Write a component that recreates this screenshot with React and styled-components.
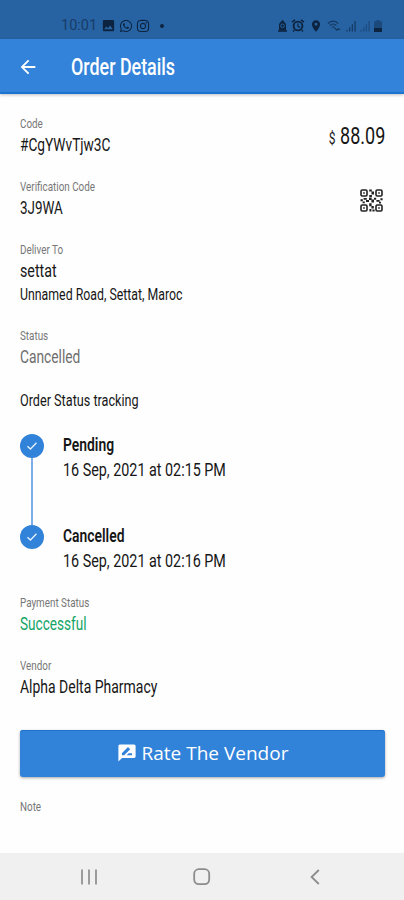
import React from "react";
import styled, { createGlobalStyle } from "styled-components";
import { MdArrowBack, MdImage, MdLocationOn } from "react-icons/md";
import { FaWhatsapp, FaInstagram } from "react-icons/fa";

const steps = [
  { title: "Pending", date: "16 Sep, 2021 at 02:15 PM" },
  { title: "Cancelled", date: "16 Sep, 2021 at 02:16 PM" },
];

function StatusBar() {
  return (
    <StatusRow>
      <StatusGroup $gap="3px">
        <Clock>10:01</Clock>
        <MdImage size={15} />
        <FaWhatsapp size={14} />
        <FaInstagram size={14} />
        <Dot />
      </StatusGroup>
      <StatusGroup $gap="4px">
        <svg width="9" height="13" viewBox="0 0 9 13">
          <path d="M1 5 4.5.8 8 5v6.5H1z" fill="currentColor" />
          <circle cx="4.5" cy="6.8" r="1.8" fill="none" stroke="#2763a3" />
          <path d="M0 12h9" stroke="currentColor" strokeWidth="1.6" />
        </svg>
        <svg width="14" height="13" viewBox="0 0 14 13">
          <path d="M1 3.2 4 .9M13 3.2 10 .9M3.2 11.2 2 12.4M10.8 11.2l1.2 1.2" stroke="currentColor" strokeWidth="1.6" />
          <circle cx="7" cy="7" r="4.4" fill="none" stroke="currentColor" strokeWidth="1.9" />
          <path d="M7 4.4v3l2 1" fill="none" stroke="currentColor" strokeWidth="1.2" />
        </svg>
        <MdLocationOn size={14} />
        <svg width="15" height="13" viewBox="0 0 16 13" opacity="0.7">
          <path
            d="M1 4.5C4 1 9 1 12 4.5M3 6.5c2-2 5-2 7 0M5 8.5c1-.9 2-.9 3 0"
            fill="none"
            stroke="currentColor"
            strokeWidth="1.2"
          />
          <path d="M8 9l2.5 2.5L12 10l2 1" fill="none" stroke="currentColor" strokeWidth="1.3" />
        </svg>
        <SignalIcon opacity="0.6" />
        <SignalIcon opacity="0.35" />
        <svg width="8" height="12" viewBox="0 0 8 12">
          <path d="M2.5 0h3v1.2H8V12H0V1.2h2.5z" fill="currentColor" opacity="0.4" />
          <path d="M0 8h8v4H0z" fill="currentColor" />
        </svg>
      </StatusGroup>
    </StatusRow>
  );
}

function SignalIcon({ opacity }) {
  return (
    <svg width="10" height="12" viewBox="0 0 11 12" opacity={opacity}>
      <path d="M1 10v2M4 7.5V12M7 4v8M10 .5V12" stroke="currentColor" strokeWidth="1.5" />
    </svg>
  );
}

function QrIcon() {
  return (
    <svg width="23" height="23" viewBox="0 0 23 23">
      <g fill="none" stroke="currentColor" strokeWidth="1.6">
        <rect x="1" y="1" width="6" height="6" rx="1.2" />
        <rect x="16" y="1" width="6" height="6" rx="1.2" />
        <rect x="1" y="16" width="6" height="6" rx="1.2" />
        <rect x="16" y="16" width="6" height="6" rx="1.2" />
      </g>
      <path
        d="M3.2 3.2h1.6v1.6H3.2zM18.2 3.2h1.6v1.6h-1.6zM3.2 18.2h1.6v1.6H3.2zM18.2 18.2h1.6v1.6h-1.6z
          M9.2.5h2.6v2H9.2zM11.5 2.5h2.5v3h-2.5zM9.3 6h2.6v2.3H9.3zM.5 10.2h2.3v2H.5zM3.6 9h3.2v1.8H3.6zM6 11h3v2H6z
          M9 8.7h2.6V11H9zM11.4 10.6h2.6v3h-2.6zM14 8.8h2.2v2H14zM16.4 11h3.2v1.7h-3.2zM20.4 9.2h2.2v2h-2.2zM2.6 12.6h2.2v1.6H2.6z
          M9.2 14.2h2.4v3H9.2zM11.4 17h2.4v2.4h-2.4zM9.4 20h2v2.5h-2zM12.4 20.4h2.2v2.2h-2.2zM19 12.8h2v1.6h-2z"
        fill="currentColor"
      />
    </svg>
  );
}

function Field({ label, value, fit = 0.74, color, shift, children }) {
  return (
    <FieldBox $shift={shift}>
      <Label $fit={0.73}>{label}</Label>
      {value && (
        <Value $fit={fit} $color={color}>
          {value}
        </Value>
      )}
      {children}
    </FieldBox>
  );
}

function App() {
  return (
    <Screen>
      <GlobalStyle />
      <StatusBar />
      <Header>
        <MdArrowBack size={22} />
        <Title $fit={0.73}>Order Details</Title>
      </Header>
      <Content>
        <SplitRow>
          <Field label="Code" value="#CgYWvTjw3C" />
          <Price $fit={0.75}>
            <small>$</small>88.09
          </Price>
        </SplitRow>
        <SplitRow>
          <Field label="Verification Code" value="3J9WA" fit={0.725} />
          <QrBox>
            <QrIcon />
          </QrBox>
        </SplitRow>
        <Field label="Deliver To" value="settat" fit={0.77}>
          <Note $fit={0.77}>Unnamed Road, Settat, Maroc</Note>
        </Field>
        <Field label="Status" value="Cancelled" color="#6f6f6f" fit={0.745} shift={-1} />
        <Note $fit={0.79}>Order Status tracking</Note>
        <Timeline>
          {steps.map((step) => (
            <Step key={step.title}>
              <Marker>
                <svg width="12" height="10" viewBox="0 0 12 10">
                  <path d="M1.5 5.2 4.4 8 10.5 1.8" fill="none" stroke="#e8f3ff" strokeWidth="1.3" />
                </svg>
              </Marker>
              <div>
                <StepTitle $fit={0.75}>{step.title}</StepTitle>
                <Value $fit={0.775}>{step.date}</Value>
              </div>
            </Step>
          ))}
        </Timeline>
        <Field label="Payment Status" value="Successful" color="#12a566" fit={0.735} />
        <Field label="Vendor" value="Alpha Delta Pharmacy" fit={0.755} />
        <RateButton>
          <svg width="18" height="18" viewBox="0 0 18 18">
            <path
              d="M1.8.5h14.4Q17.6.5 17.6 2v10.6q0 1.4-1.4 1.4H4L.4 17.4V2Q.4.5 1.8.5z"
              fill="#fff"
            />
            <path d="M4 11.2V9l6-6 2.2 2.2-6 6zM8.6 11.2l2-2H14v2z" fill="#3182d9" />
          </svg>
          <span>Rate The Vendor</span>
        </RateButton>
        <Field label="Note" />
      </Content>
      <NavBar>
        <svg width="16" height="16" viewBox="0 0 16 16">
          <path d="M1 .5v15M8 .5v15M15 .5v15" stroke="#929292" strokeWidth="1.8" />
        </svg>
        <svg width="18" height="18" viewBox="0 0 18 18">
          <rect x="1.2" y="1.2" width="15" height="15" rx="4.6" fill="none" stroke="#8c8c8c" strokeWidth="1.8" />
        </svg>
        <svg width="10" height="16" viewBox="0 0 10 16">
          <path d="M8.8 1 1.6 8l7.2 7" fill="none" stroke="#8c8c8c" strokeWidth="1.8" />
        </svg>
      </NavBar>
    </Screen>
  );
}

export default App;

const GlobalStyle = createGlobalStyle`
  * {
    box-sizing: border-box;
  }
  body {
    margin: 0;
    background: #fefefe;
    font-family: Roboto, "Liberation Sans", sans-serif;
  }
  svg {
    display: block;
    flex-shrink: 0;
  }
`;

const Screen = styled.div`
  display: flex;
  flex-direction: column;
  width: 404px;
  height: 900px;
  overflow: hidden;
  background: #fefefe;
  color: #161616;
`;

const StatusRow = styled.div`
  display: flex;
  justify-content: space-between;
  height: 39px;
  padding: 12px 22px 0 61px;
  background: #2763a3;
  color: #0c2440;
`;

const StatusGroup = styled.div`
  display: flex;
  align-items: center;
  gap: ${(props) => props.$gap};
  height: 27px;
`;

const Clock = styled.span`
  width: 37px;
  font-size: 14.5px;
  color: #173c68;
`;

const Dot = styled.span`
  width: 4px;
  height: 4px;
  margin-left: 7px;
  border-radius: 50%;
  background: currentColor;
`;

const Header = styled.header`
  display: flex;
  align-items: center;
  height: 55px;
  padding: 2px 0 0 17px;
  gap: 32px;
  background: #3483da;
  border-bottom: 2px solid #1b74d0;
  box-shadow: 0 1px 3px rgba(0, 0, 0, 0.25);
  color: #fff;
`;

/* Narrow lettering: the tall face is squeezed horizontally */
const Condensed = styled.div`
  width: max-content;
  white-space: nowrap;
  transform: scaleX(${(props) => props.$fit});
  transform-origin: left center;
`;

const Title = styled(Condensed)`
  font-size: 24.5px;
  font-weight: 500;
`;

const Content = styled.main`
  display: flex;
  flex: 1;
  flex-direction: column;
  gap: 19px;
  padding: 19px 19px 0 20px;
`;

const SplitRow = styled.div`
  display: flex;
  align-items: center;
  justify-content: space-between;
`;

const FieldBox = styled.section`
  display: flex;
  flex-direction: column;
  margin-top: ${(props) => props.$shift || 0}px;
  margin-bottom: ${(props) => -(props.$shift || 0)}px;
`;

const Label = styled(Condensed)`
  font-size: 13.5px;
  line-height: 20px;
  color: #777;
`;

const Value = styled(Condensed)`
  font-size: 18.5px;
  line-height: 24px;
  color: ${(props) => props.$color || "#161616"};
`;

const Note = styled(Condensed)`
  font-size: 16px;
  line-height: 24px;
`;

const Price = styled(Condensed)`
  margin: 4px 0 0;
  transform-origin: right center;
  font-size: 24px;
  line-height: 30px;

  small {
    margin-right: 6px;
    font-size: 16px;
  }
`;

const QrBox = styled.div`
  margin: 5px 2px 0 0;
  color: #222;
`;

const Timeline = styled.div`
  display: flex;
  flex-direction: column;
  margin-bottom: -41px;
`;

const Step = styled.div`
  position: relative;
  display: flex;
  gap: 19px;
  height: 91px;
  padding-top: 1px;

  &:not(:last-child)::before {
    content: "";
    position: absolute;
    top: 26px;
    left: 11px;
    width: 2px;
    height: 67px;
    background: #7caee8;
  }
`;

const Marker = styled.div`
  display: flex;
  align-items: center;
  justify-content: center;
  width: 24px;
  height: 24px;
  margin-top: 1px;
  border-radius: 50%;
  background: #3182d9;
`;

const StepTitle = styled(Condensed)`
  font-size: 18.5px;
  font-weight: 600;
  line-height: 25px;
`;

const RateButton = styled.button`
  display: flex;
  align-items: center;
  justify-content: center;
  gap: 6px;
  width: 365px;
  height: 47px;
  margin: 12px 0 0;
  padding: 0 0 1px 1px;
  border: 0;
  border-radius: 3px;
  background: #3182d9;
  box-shadow: inset 0 1px 0 #1c72cc, 0 1px 3px rgba(0, 0, 0, 0.35);
  color: #fff;
  font-family: "Open Sans", sans-serif;
  font-size: 19px;
`;

const NavBar = styled.nav`
  display: flex;
  align-items: center;
  justify-content: space-between;
  height: 47px;
  padding: 0 84px 0 81px;
  background: #f0f0f0;

  svg:nth-child(2) {
    margin-right: 4px;
  }
`;
